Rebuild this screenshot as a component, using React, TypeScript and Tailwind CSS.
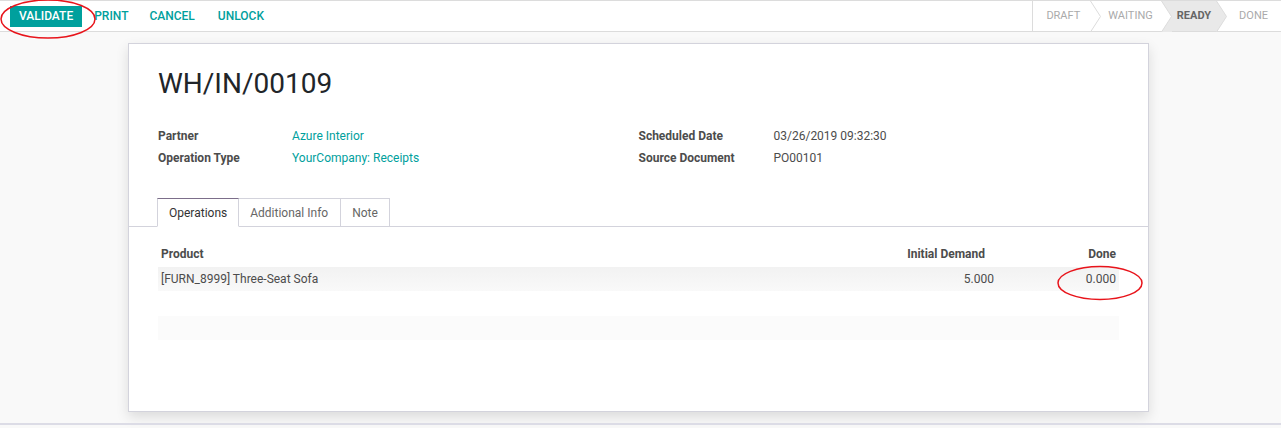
import React from "react";

const teal = "text-[#00A09D]";

function Chevron({ fillLeft, fillRight }: { fillLeft?: string; fillRight?: string }) {
  // separator between status steps: a thin chevron line, optional fills on each side
  return (
    <svg width="11" height="31" viewBox="0 0 11 31" className="block shrink-0">
      {fillLeft && <polygon points="0,0 0.5,0 10.5,15.5 0.5,31 0,31" fill={fillLeft} />}
      {fillRight && <polygon points="0.5,0 11,0 11,31 0.5,31 10.5,15.5" fill={fillRight} />}
      <polyline points="0.5,0 10.5,15.5 0.5,31" fill="none" stroke="#dcdcdc" strokeWidth="1" />
    </svg>
  );
}

export default function App() {
  return (
    <div className="relative w-[1281px] h-[428px] bg-[#f9f9f9] font-['Roboto',sans-serif] overflow-hidden">
      {/* Control panel */}
      <div className="flex items-center justify-between h-[32px] bg-white border-t border-b border-[#dcdcdc]">
        <div className="flex items-center pl-[10px]">
          <button className="h-[21px] px-[9px] bg-[#00A09D] text-white text-[12px] font-medium uppercase leading-none">
            Validate
          </button>
          <button className={`ml-[12px] text-[12px] font-medium uppercase ${teal}`}>Print</button>
          <button className={`ml-[21px] text-[12px] font-medium uppercase ${teal}`}>Cancel</button>
          <button className={`ml-[23px] text-[12px] font-medium uppercase ${teal}`}>Unlock</button>
        </div>
        <div className="flex items-stretch h-[30px] border-l border-[#dcdcdc] text-[11px] uppercase text-[#aaaaaa] self-stretch">
          <div className="flex items-center pl-[13px] pr-[10px]">Draft</div>
          <Chevron />
          <div className="flex items-center pl-[7px] pr-[8px]">Waiting</div>
          <Chevron fillRight="#e9e9e9" />
          <div className="flex items-center pl-[5px] pr-[5px] bg-[#e9e9e9] font-bold text-[#666666]">Ready</div>
          <Chevron fillLeft="#e9e9e9" />
          <div className="flex items-center pl-[12px] pr-[13px]">Done</div>
        </div>
      </div>

      {/* Sheet */}
      <div className="ml-[128px] mt-[11px] w-[1021px] h-[369px] bg-white border border-[#d3d3dc] shadow-[0_5px_12px_rgba(0,0,0,0.12)]">
        <div className="px-[29px] pt-[22px]">
          <h1 className="text-[28px] leading-[36px] text-[#212529]">WH/IN/00109</h1>
          <div className="grid grid-cols-2 mt-[23px] text-[12px] leading-[22px]">
            <div className="grid grid-cols-[134px_1fr]">
              <div className="font-bold text-[#4c4c4c]">Partner</div>
              <div className={teal}>Azure Interior</div>
              <div className="font-bold text-[#4c4c4c]">Operation Type</div>
              <div className={teal}>YourCompany: Receipts</div>
            </div>
            <div className="grid grid-cols-[135px_1fr]">
              <div className="font-bold text-[#4c4c4c]">Scheduled Date</div>
              <div className="text-[#4c4c4c]">03/26/2019 09:32:30</div>
              <div className="font-bold text-[#4c4c4c]">Source Document</div>
              <div className="text-[#4c4c4c]">PO00101</div>
            </div>
          </div>
        </div>

        {/* Tabs */}
        <div className="flex mt-[29px] pl-[28px] border-b border-[#d3d3dc] text-[12px] h-[29px]">
          <div className="flex items-center px-[11px] bg-white border border-[#d3d3dc] border-t-[#7c6e8a] border-b-white mb-[-1px] text-[#333333]">
            Operations
          </div>
          <div className="flex items-center pl-[11px] pr-[12px] border-t border-r border-[#d3d3dc] text-[#666666]">
            Additional Info
          </div>
          <div className="flex items-center px-[11px] border-t border-r border-[#d3d3dc] text-[#666666]">
            Note
          </div>
        </div>

        {/* Operations table */}
        <div className="px-[29px] pt-[14px] text-[12px]">
          <div className="grid grid-cols-[1fr_134px] h-[26px] items-center font-bold text-[#4c4c4c]">
            <div className="flex justify-between pl-[3px]">
              <span>Product</span>
              <span>Initial Demand</span>
            </div>
            <div className="text-right pr-[3px]">Done</div>
          </div>
          <div className="grid grid-cols-[1fr_125px] h-[24px] items-center text-[#4c4c4c] bg-gradient-to-b from-[#f2f2f2] to-[#f9f9f9]">
            <div className="flex justify-between pl-[3px]">
              <span>[FURN_8999] Three-Seat Sofa</span>
              <span>5.000</span>
            </div>
            <div className="text-right pr-[3px]">0.000</div>
          </div>
          <div className="h-[24px] mt-[25px] bg-[#fbfbfb]" />
        </div>
      </div>

      <div className="mt-[11px] h-[2px] bg-[#dcdce6]" />

      {/* annotation ellipses */}
      <svg className="absolute left-0 top-0 pointer-events-none" width="1281" height="428">
        <ellipse cx="48" cy="19" rx="47" ry="19" fill="none" stroke="#e8141b" strokeWidth="1.5" />
        <ellipse cx="1100" cy="283" rx="42" ry="16.5" fill="none" stroke="#e8141b" strokeWidth="1.5" />
      </svg>
    </div>
  );
}
